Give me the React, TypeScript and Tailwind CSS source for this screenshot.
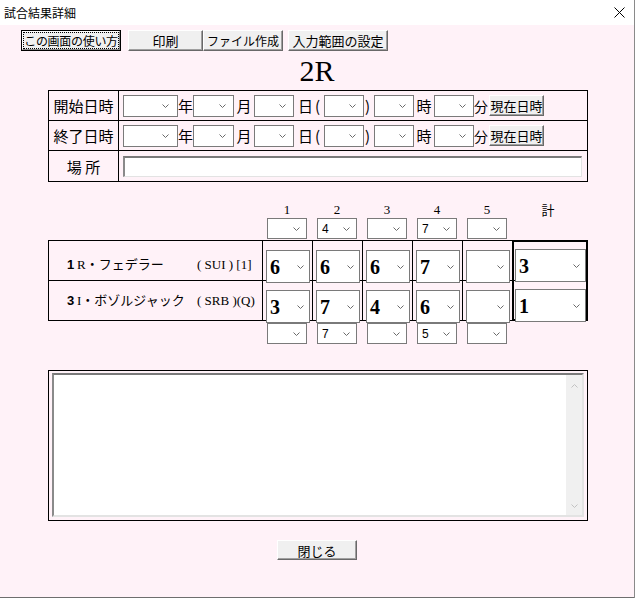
import React from "react";

const JP = "font-['Noto_Sans_CJK_JP',sans-serif]";
const SERIF = "font-['Liberation_Serif','Noto_Sans_CJK_JP',serif]";
const SANS = "font-['Liberation_Sans','Noto_Sans_CJK_JP',sans-serif]";

function Chev({ cls, up, color = "#6a6a6a" }: { cls: string; up?: boolean; color?: string }) {
  return (
    <svg className={`shrink-0 ${cls}`} width="7" height="4" viewBox="0 0 7 4">
      <path
        d={up ? "M0.5 3.5L3.5 0.5L6.5 3.5" : "M0.5 0.5L3.5 3.5L6.5 0.5"}
        fill="none"
        stroke={color}
        strokeWidth="1"
      />
    </svg>
  );
}

function Sel({
  cls,
  value,
  valueCls = "",
  chev = "mr-[8px]",
}: {
  cls: string;
  value?: string;
  valueCls?: string;
  chev?: string;
}) {
  return (
    <div className={`relative z-10 shrink-0 bg-white border border-[#7a7a7a] flex items-center ${cls}`}>
      {value ? <span className={valueCls}>{value}</span> : null}
      <div className="ml-auto flex items-center">
        <Chev cls={chev} />
      </div>
    </div>
  );
}

function Btn({
  cls,
  children,
  focused,
  text = "text-[13px]",
}: {
  cls: string;
  children: React.ReactNode;
  focused?: boolean;
  text?: string;
}) {
  if (focused) {
    return (
      <div className={`shrink-0 bg-[#f0f0f0] border border-black ${cls}`}>
        <div className="w-full h-full border border-t-white border-l-white border-b-[#8a8a8a] border-r-[#8a8a8a]">
          <div
            className={`w-full h-full border border-dotted border-black flex items-center justify-center leading-none whitespace-nowrap ${JP} ${text}`}
          >
            {children}
          </div>
        </div>
      </div>
    );
  }
  return (
    <div
      className={`shrink-0 bg-[#f0f0f0] border border-t-white border-l-white border-b-[#696969] border-r-[#696969] shadow-[inset_-1px_-1px_0_#a0a0a0] flex items-center justify-center leading-none whitespace-nowrap ${JP} ${text} ${cls}`}
    >
      {children}
    </div>
  );
}

function DateRow({ label, border }: { label: string; border?: boolean }) {
  const t = `text-[15px] leading-none whitespace-nowrap ${JP}`;
  return (
    <div className={`h-[30px] flex ${border ? "border-b border-black" : ""}`}>
      <div className={`w-[70px] shrink-0 border-r border-black flex items-center justify-center ${t}`}>{label}</div>
      <div className="flex items-center pl-[4px]">
        <Sel cls="w-[55px] h-[22px]" chev="mr-[8px]" />
        <span className={`w-[15px] ${t}`}>年</span>
        <Sel cls="w-[41px] h-[22px]" chev="mr-[7px]" />
        <span className={`w-[20px] text-center ${t}`}>月</span>
        <Sel cls="w-[40px] h-[22px]" chev="mr-[7px]" />
        <span className={`w-[30px] pl-[4px] ${t}`}>
          日<span className="ml-[2px]">(</span>
        </span>
        <Sel cls="w-[40px] h-[22px]" chev="mr-[7px]" />
        <span className={`w-[10px] pl-[1px] ${t}`}>)</span>
        <Sel cls="w-[40px] h-[22px]" chev="mr-[7px]" />
        <span className={`w-[20px] text-center ${t}`}>時</span>
        <Sel cls="w-[40px] h-[22px]" chev="mr-[7px]" />
        <span className={`w-[15px] text-[14px] leading-none whitespace-nowrap ${JP}`}>分</span>
        <Btn cls="w-[55px] h-[21px]">現在日時</Btn>
      </div>
    </div>
  );
}

function SmallSelRow({ values }: { values: string[] }) {
  return (
    <div className="ml-[48px] flex h-[21px]">
      <div className="w-[214px] shrink-0" />
      {values.map((v, i) => (
        <div key={i} className="w-[50px] shrink-0">
          <Sel
            cls="ml-[5px] w-[40px] h-[21px]"
            value={v}
            valueCls={`pl-[4px] text-[12px] leading-none ${SANS}`}
            chev="mr-[6px]"
          />
        </div>
      ))}
    </div>
  );
}

const bigVal = "pl-[3px] text-[20px] font-bold leading-none font-['Liberation_Serif',serif]";

function ScoreCells({ values }: { values: string[] }) {
  return (
    <>
      {values.map((v, i) => (
        <div
          key={i}
          className={`shrink-0 pt-[9px] pl-[3px] ${i < 4 ? "w-[50px] border-r border-black" : "w-[49px]"}`}
        >
          <Sel cls="w-[44px] h-[33px]" value={v} valueCls={bigVal} chev="mr-[5px]" />
        </div>
      ))}
    </>
  );
}

export default function App() {
  return (
    <div className="w-[635px] h-[598px] bg-white flex flex-col border-r border-[#8a8a8a] text-black">
      {/* title bar */}
      <div className="h-[25px] shrink-0 flex items-center pl-[4px]">
        <span className={`text-[12px] leading-none ${JP}`}>試合結果詳細</span>
        <svg className="ml-auto mr-[9px]" width="11" height="11" viewBox="0 0 11 11">
          <path d="M0.5 0.5L10.5 10.5M10.5 0.5L0.5 10.5" stroke="#000" strokeWidth="1" fill="none" />
        </svg>
      </div>

      {/* content */}
      <div className="flex-1 bg-[#fff2f8] border-b border-[#6e6e6e] flex flex-col">
        {/* toolbar */}
        <div className="mt-[5px] pl-[21px] flex h-[21px]">
          <Btn cls="w-[100px] h-[21px]" text="text-[12px] tracking-[-0.3px]" focused>
            この画面の使い方
          </Btn>
          <Btn cls="ml-[7px] w-[75px] h-[21px]">印刷</Btn>
          <Btn cls="w-[80px] h-[21px]" text="text-[12px]">
            ファイル作成
          </Btn>
          <Btn cls="ml-[5px] w-[100px] h-[21px]">入力範囲の設定</Btn>
        </div>

        {/* heading */}
        <div className="h-[39px] flex items-center justify-center">
          <span className="text-[30px] leading-none font-['Liberation_Serif',serif]">2R</span>
        </div>

        {/* date table */}
        <div className="ml-[48px] w-[540px] border border-black">
          <DateRow label="開始日時" border />
          <DateRow label="終了日時" border />
          <div className="h-[30px] flex">
            <div
              className={`w-[70px] shrink-0 border-r border-black flex items-center justify-center text-[15px] leading-none whitespace-nowrap ${JP}`}
            >
              場 所
            </div>
            <div className="flex items-center pl-[4px]">
              <div className="w-[459px] h-[21px] bg-white border-t-2 border-l-2 border-t-[#7a7a7a] border-l-[#8a8a8a] border-b border-r border-b-[#e3e3e3] border-r-[#e3e3e3]" />
            </div>
          </div>
        </div>

        {/* score headers */}
        <div className="mt-[18px] ml-[48px] flex h-[18px] items-center">
          <div className="w-[214px] shrink-0" />
          {["1", "2", "3", "4", "5"].map((n) => (
            <div key={n} className="w-[50px] shrink-0 text-center text-[13px] leading-none font-['Liberation_Serif',serif]">
              {n}
            </div>
          ))}
          <div className={`w-[76px] shrink-0 text-center pr-[4px] text-[13px] leading-none ${JP}`}>計</div>
        </div>

        <SmallSelRow values={["", "4", "", "7", ""]} />

        {/* score table */}
        <div className="mt-[1px] ml-[48px] flex">
          <div className="w-[464px] h-[81px] shrink-0 border-l border-t border-b border-black flex flex-col">
            <div className="h-[40px] flex border-b border-black">
              <div className="w-[214px] shrink-0 border-r border-black pl-[18px] pt-[16px] flex items-start text-[13px] leading-[16px] whitespace-nowrap">
                <span className={`w-[10px] font-bold ${SANS}`}>1</span>
                <span className={`w-[120px] ${SERIF}`}>R・フェデラー</span>
                <span className={SERIF}>( SUI ) [1]</span>
              </div>
              <ScoreCells values={["6", "6", "6", "7", ""]} />
            </div>
            <div className="h-[39px] flex">
              <div className="w-[214px] shrink-0 border-r border-black pl-[18px] pt-[12px] flex items-start text-[13px] leading-[16px] whitespace-nowrap">
                <span className={`w-[10px] font-bold ${SANS}`}>3</span>
                <span className={`w-[120px] ${SERIF}`}>I・ボゾルジャック</span>
                <span className={SERIF}>( SRB )(Q)</span>
              </div>
              <ScoreCells values={["3", "7", "4", "6", ""]} />
            </div>
          </div>
          <div className="w-[76px] h-[81px] shrink-0 border-2 border-black flex flex-col">
            <div className="h-[39px] border-b border-black pt-[7px] pl-[1px]">
              <Sel cls="w-[71px] h-[33px]" value="3" valueCls={bigVal} chev="mr-[5px]" />
            </div>
            <div className="h-[38px] pt-[8px] pl-[1px]">
              <Sel cls="w-[71px] h-[33px]" value="1" valueCls={bigVal} chev="mr-[5px]" />
            </div>
          </div>
        </div>

        <div className="mt-[2px]">
          <SmallSelRow values={["", "7", "", "5", ""]} />
        </div>

        {/* memo */}
        <div className="mt-[26px] ml-[48px] w-[540px] h-[151px] border border-black pt-[2px] pl-[3px] pr-[3px] pb-[3px] flex">
          <div className="flex-1 flex bg-white border-t-2 border-l-2 border-t-[#7a7a7a] border-l-[#8a8a8a] border-b-2 border-r-2 border-b-[#e3e3e3] border-r-[#e3e3e3]">
            <div className="flex-1" />
            <div className="w-[16px] bg-[#f0f0f0] flex flex-col items-center justify-between pt-[9px] pb-[7px]">
              <Chev cls="" up color="#c2c2c2" />
              <Chev cls="" color="#c2c2c2" />
            </div>
          </div>
        </div>

        <div className="mt-[19px] flex justify-center">
          <Btn cls="w-[80px] h-[20px]">閉じる</Btn>
        </div>
      </div>
    </div>
  );
}
